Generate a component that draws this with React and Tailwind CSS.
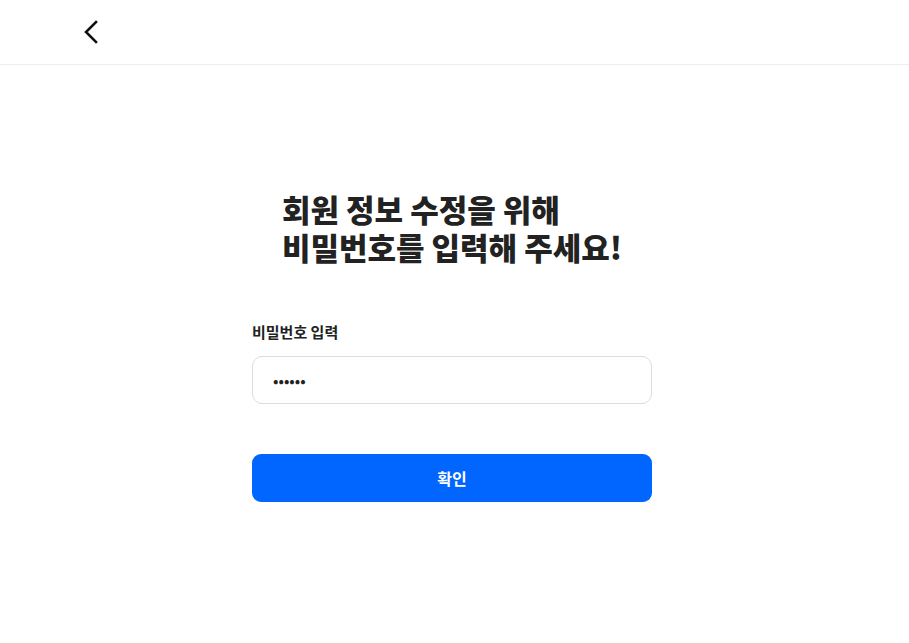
export default function App() {
  return (
    <div className="min-h-screen bg-white text-[#222]" style={{ fontFamily: '"Noto Sans CJK KR", "Noto Sans", sans-serif' }}>
      <header className="h-[65px] border-b border-[#eeeeee] flex items-center pl-[82px]">
        <svg width="20" height="26" viewBox="0 0 20 26" fill="none" stroke="#111" strokeWidth="2.6" strokeLinecap="square">
          <path d="M14 3 L4 13 L14 23" />
        </svg>
      </header>
      <main className="flex justify-center pr-[5px]">
        <div className="w-[400px] flex flex-col">
          <h1 className="self-center mt-[125px] text-[31px] leading-[38px] font-black tracking-[0px] text-[#222]">
            회원 정보 수정을 위해<br />비밀번호를 입력해 주세요!
          </h1>
          <label className="mt-[55px] text-[15px] leading-[22px] font-bold text-[#222]">비밀번호 입력</label>
          <input
            type="password"
            defaultValue="123456"
            className="mt-[13px] h-[48px] w-full rounded-[10px] border border-[#dddddd] px-[20px] text-[16px] outline-none"
          />
          <button className="mt-[50px] h-[48px] w-full rounded-[9px] bg-[#0066ff] text-white text-[16px] font-bold">
            확인
          </button>
        </div>
      </main>
    </div>
  );
}
